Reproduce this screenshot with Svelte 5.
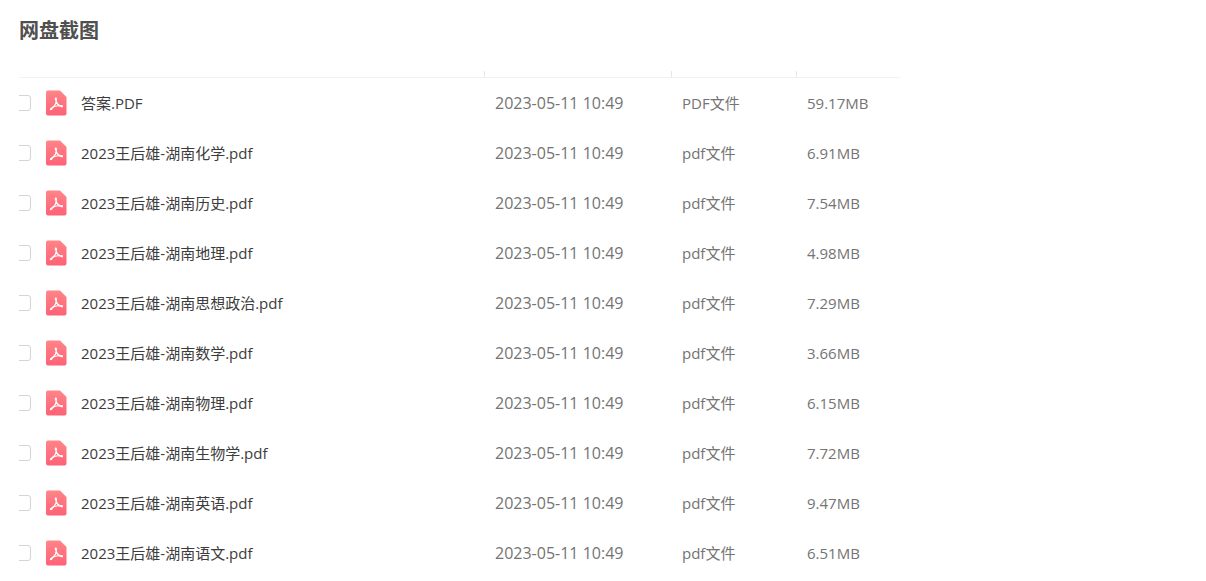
<script>
	const data = '2023-05-11 10:49';

	let files = [
		{ name: '答案.PDF', type: 'PDF文件', size: '59.17MB' },
		{ name: '2023王后雄-湖南化学.pdf', type: 'pdf文件', size: '6.91MB' },
		{ name: '2023王后雄-湖南历史.pdf', type: 'pdf文件', size: '7.54MB' },
		{ name: '2023王后雄-湖南地理.pdf', type: 'pdf文件', size: '4.98MB' },
		{ name: '2023王后雄-湖南思想政治.pdf', type: 'pdf文件', size: '7.29MB' },
		{ name: '2023王后雄-湖南数学.pdf', type: 'pdf文件', size: '3.66MB' },
		{ name: '2023王后雄-湖南物理.pdf', type: 'pdf文件', size: '6.15MB' },
		{ name: '2023王后雄-湖南生物学.pdf', type: 'pdf文件', size: '7.72MB' },
		{ name: '2023王后雄-湖南英语.pdf', type: 'pdf文件', size: '9.47MB' },
		{ name: '2023王后雄-湖南语文.pdf', type: 'pdf文件', size: '6.51MB' }
	];
</script>

<style>
	:global(body) {
		background: #fff;
	}

	main {
		padding: 17px 19px 0;
		font-family: "Open Sans", "Noto Sans CJK SC", sans-serif;
	}

	h2 {
		margin: 0 0 26px;
		font-size: 20px;
		line-height: 28px;
		color: #505050;
	}

	.list {
		max-width: 881px;
		overflow: hidden;
	}

	table {
		width: 100%;
		table-layout: fixed;
		border-collapse: separate;
		border-spacing: 0;
		font-size: 15px;
		line-height: 20px;
	}

	th {
		box-sizing: border-box;
		height: 7px;
		padding: 0;
		border-bottom: 1px solid #f2f2f2;
	}

	th + th {
		border-left: 1px solid #e6e6e6;
	}

	.date { width: 187px; }
	.type { width: 125px; }
	.size { width: 104px; }

	td {
		height: 50px;
		padding: 0 0 0 11px;
		box-sizing: border-box;
		color: #747474;
		white-space: nowrap;
	}

	td:first-child {
		padding-left: 0;
	}

	td.time {
		font-size: 16px;
	}

	label {
		display: flex;
		align-items: center;
		color: #3c3c3c;
	}

	input {
		appearance: none;
		flex: none;
		width: 16px;
		height: 16px;
		margin: 0 15px 0 -4px;
		border: 1px solid #d4d4d4;
		border-radius: 3px;
		background: #fff;
	}

	input:checked {
		background: #ff6b7a;
	}

	svg {
		flex: none;
		width: 21px;
		height: 26px;
		margin-right: 14px;
	}
</style>

<main>
	<h2>网盘截图</h2>

	<div class="list">
		<table>
			<thead>
				<tr>
					<th></th>
					<th class="date"></th>
					<th class="type"></th>
					<th class="size"></th>
				</tr>
			</thead>
			<tbody>
				{#each files as file, i}
					<tr>
						<td>
							<label>
								<input type="checkbox" />
								<svg viewBox="0 0 21 26" aria-hidden="true">
									<linearGradient id="red{i}" x1="0" y1="0" x2="0" y2="1">
										<stop offset="0" stop-color="#ff8588" />
										<stop offset="1" stop-color="#ff6176" />
									</linearGradient>
									<path fill="url(#red{i})" d="M2 .5H14L20.5 7V23.5Q20.5 25.5 18.5 25.5H2Q0 25.5 0 23.5V2.5Q0 .5 2 .5Z" />
									<g fill="none" stroke="#fff" stroke-linecap="round" stroke-linejoin="round">
										<path stroke-width="1.3" d="M9.8 8.5C11 11.5 9.4 15.8 4.6 19.3M10.2 11.5C11 14 13 16 16.2 16.5" />
										<path stroke-width="1.2" d="M7.2 16.9Q11.5 15.3 16 15.9" />
										<path stroke-width="2" d="M9.8 8.5V9.5M4.8 19.2L5.6 18.6M15.6 16.2H16" />
									</g>
								</svg>
								{file.name}
							</label>
						</td>
						<td class="time">{data}</td>
						<td>{file.type}</td>
						<td>{file.size}</td>
					</tr>
				{/each}
			</tbody>
		</table>
	</div>
</main>
